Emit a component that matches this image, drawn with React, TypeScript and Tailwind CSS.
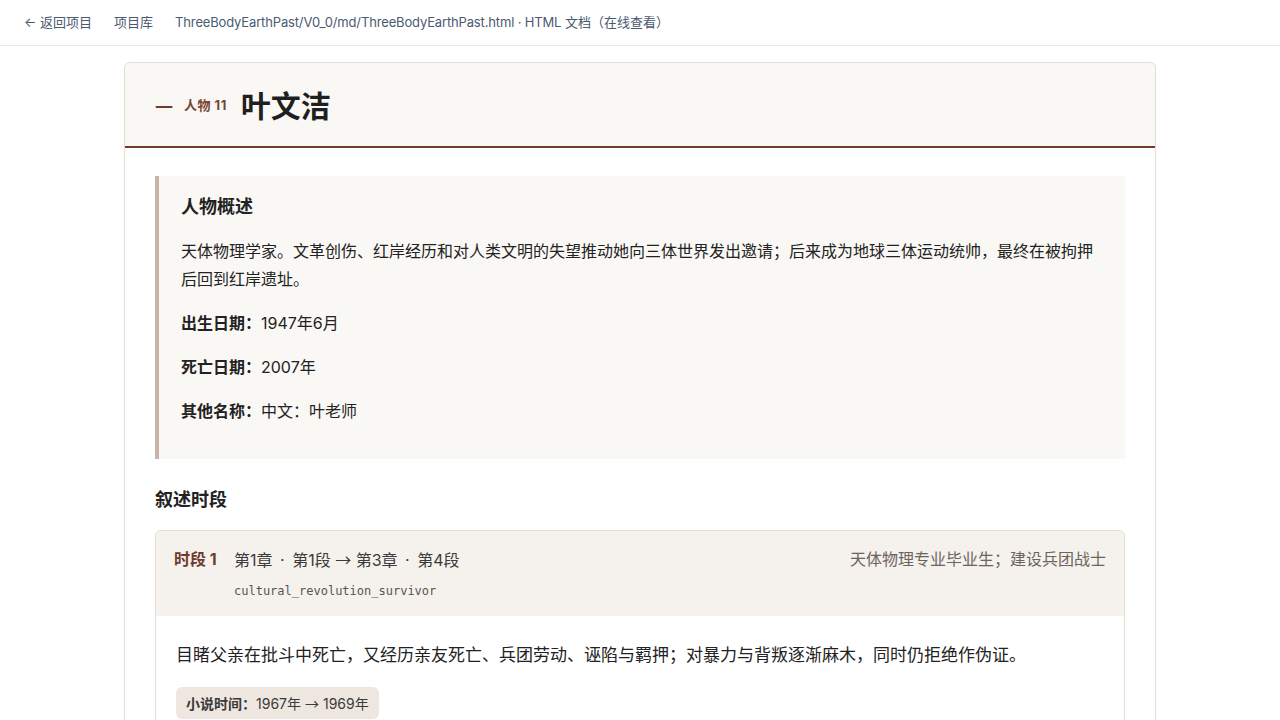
import React from "react";

const font = { fontFamily: 'Inter, "Noto Sans CJK SC", "Noto Sans", sans-serif' };
const cjk = { fontFamily: '"Noto Sans CJK SC", sans-serif' };

function Dot() {
  return <span className="mx-[3px]">·</span>;
}

export default function App() {
  return (
    <div className="min-h-[720px] bg-white text-[#222]" style={font}>
      <nav className="flex h-[46px] items-center gap-[22px] border-b border-[#e5e7eb] px-6 text-[13px] text-[#4a5a70]">
        <span>← 返回项目</span>
        <span>项目库</span>
        <span>
          <span className="tracking-[-0.15px]">ThreeBodyEarthPast/V0_0/md/ThreeBodyEarthPast.html · HTML</span>{" "}
          <span style={cjk}>文档（在线查看）</span>
        </span>
      </nav>
      <main className="mx-auto w-[1032px] pt-4">
        <section className="rounded-t-md border border-[#e2ddd5] border-b-0">
          <header className="flex h-[85px] items-center rounded-t-md border-b-2 border-[#6f3b2c] bg-[#faf8f5] px-[30px] pt-[3px]">
            <span className="text-[18px] font-medium text-[#6f3b2c]" style={cjk}>一</span>
            <span className="ml-[11px] text-[13px] font-bold tracking-[0.5px] text-[#774434]">人物 11</span>
            <h1 className="ml-[14px] text-[30px] font-bold leading-9 text-[#1f1f1f]">叶文洁</h1>
          </header>
          <div className="px-[30px] pt-[28px] pb-10">
            <div className="border-l-4 border-[#c9b4a6] bg-[#faf8f5] pl-[22px] pr-[22px] pt-[17px] pb-[18px]">
              <h2 className="mb-[16px] text-[18px] font-bold leading-7">人物概述</h2>
              <p className="mb-4 text-[16px] leading-7">
                天体物理学家。文革创伤、红岸经历和对人类文明的失望推动她向三体世界发出邀请；后来成为地球三体运动统帅，最终在被拘押后回到红岸遗址。
              </p>
              <p className="mb-4 text-[16px] leading-7">
                <strong>出生日期：</strong>1947年6月
              </p>
              <p className="mb-4 text-[16px] leading-7">
                <strong>死亡日期：</strong>2007年
              </p>
              <p className="mb-4 text-[16px] leading-7">
                <strong>其他名称：</strong>中文：叶老师
              </p>
            </div>
            <h2 className="mt-[27px] mb-[16px] text-[18px] font-bold leading-7">叙述时段</h2>
            <div className="rounded-md border border-[#e2ddd5]">
              <div className="flex items-start justify-between rounded-t-md bg-[#f5f1ec] px-[18px] pt-4 pb-[15px]">
                <div className="flex">
                  <span className="w-[60px] shrink-0 text-[16px] font-bold leading-6 text-[#6f3b2c]">时段 1</span>
                  <div>
                    <div className="text-[16px] leading-6 text-[#3a3a3a]">
                      第1章 <Dot /> 第1段 <span style={cjk}>→</span> 第3章 <Dot /> 第4段
                    </div>
                    <div
                      className="mt-[9px] text-[12px] leading-5 text-[#555]"
                      style={{ fontFamily: '"DejaVu Sans Mono", "Liberation Mono", monospace' }}
                    >
                      cultural_revolution_survivor
                    </div>
                  </div>
                </div>
                <span className="text-[16px] leading-6 text-[#6b6560]">天体物理专业毕业生；建设兵团战士</span>
              </div>
              <div className="px-5 pt-[25px] pb-5">
                <p className="text-[17px] leading-7 text-[#222]">
                  目睹父亲在批斗中死亡，又经历亲友死亡、兵团劳动、诬陷与羁押；对暴力与背叛逐渐麻木，同时仍拒绝作伪证。
                </p>
                <div className="mt-[18px] inline-flex h-8 items-center rounded-md bg-[#eee7df] px-[10px] text-[14px] text-[#3a3a3a]">
                  <strong>小说时间：</strong>1967年<span className="mx-[4px]" style={cjk}>→</span>1969年
                </div>
              </div>
            </div>
          </div>
        </section>
      </main>
    </div>
  );
}
